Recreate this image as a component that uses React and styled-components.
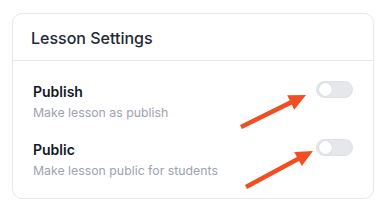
import React from "react";
import styled, { createGlobalStyle } from "styled-components";

const Global = createGlobalStyle`
  html, body { margin: 0; padding: 0; background: #ffffff; }
  body { font-family: Inter, "Noto Sans", sans-serif; -webkit-font-smoothing: antialiased; }
`;

const Page = styled.div`
  position: relative;
  width: 387px;
  height: 212px;
  padding: 13px 13px 13px 12px;
  box-sizing: border-box;
`;

const Card = styled.section`
  box-sizing: border-box;
  width: 362px;
  height: 186px;
  border: 1px solid #e5e7eb;
  border-radius: 10px;
  background: #fff;
  display: flex;
  flex-direction: column;
`;

const Header = styled.header`
  height: 47px;
  box-sizing: border-box;
  padding: 1px 18px 0;
  display: flex;
  align-items: center;
  border-bottom: 1px solid #e5e7eb;
`;

const Title = styled.h2`
  margin: 0;
  font-size: 16px;
  line-height: 20px;
  font-weight: 500;
  color: #1f2937;
`;

const Body = styled.div`
  padding: 22px 20px 0 20px;
  display: flex;
  flex-direction: column;
  gap: 20px;
`;

const Row = styled.div`
  display: flex;
  justify-content: space-between;
  align-items: flex-start;
`;

const Texts = styled.div`
  display: flex;
  flex-direction: column;
  gap: 3px;
`;

const Label = styled.div`
  font-size: 14px;
  line-height: 18px;
  font-weight: 600;
  color: #111827;
`;

const Hint = styled.div`
  font-size: 12.3px;
  line-height: 17px;
  color: #9ca3af;
`;

const Track = styled.span`
  box-sizing: border-box;
  width: 37px;
  height: 17px;
  border-radius: 9px;
  background: #e5e7eb;
  border: 1px solid #dde0e4;
  display: flex;
  align-items: center;
  padding: 0 2px;
  margin-top: -2px;
`;

const Knob = styled.span`
  width: 13px;
  height: 13px;
  border-radius: 50%;
  background: #fff;
  box-shadow: 0 0 0 0.5px #d1d5db;
`;

const Overlay = styled.svg`
  position: absolute;
  left: 0;
  top: 0;
  pointer-events: none;
`;

function Arrow({ x1, y1, x2, y2 }) {
  const dx = x2 - x1;
  const dy = y2 - y1;
  const len = Math.hypot(dx, dy);
  const ux = dx / len;
  const uy = dy / len;
  const hl = 17;
  const hw = 8;
  const bx = x2 - ux * hl;
  const by = y2 - uy * hl;
  const px = -uy;
  const py = ux;
  const pts = `${x2},${y2} ${bx + px * hw},${by + py * hw} ${bx - px * hw},${by - py * hw}`;
  return (
    <g>
      <line x1={x1} y1={y1} x2={bx + ux * 2} y2={by + uy * 2} stroke="#f24e22" strokeWidth="4.5" />
      <polygon points={pts} fill="#f24e22" />
    </g>
  );
}

const settings = [
  { title: "Publish", hint: "Make lesson as publish" },
  { title: "Public", hint: "Make lesson public for students" },
];

export default function App() {
  return (
    <>
      <Global />
      <Page>
        <Card>
          <Header>
            <Title>Lesson Settings</Title>
          </Header>
          <Body>
            {settings.map((s) => (
              <Row key={s.title}>
                <Texts>
                  <Label>{s.title}</Label>
                  <Hint>{s.hint}</Hint>
                </Texts>
                <Track>
                  <Knob />
                </Track>
              </Row>
            ))}
          </Body>
        </Card>
        <Overlay width="387" height="212" viewBox="0 0 387 212">
          <Arrow x1={241} y1={127} x2={306} y2={95} />
          <Arrow x1={246} y1={187} x2={313} y2={151} />
        </Overlay>
      </Page>
    </>
  );
}
